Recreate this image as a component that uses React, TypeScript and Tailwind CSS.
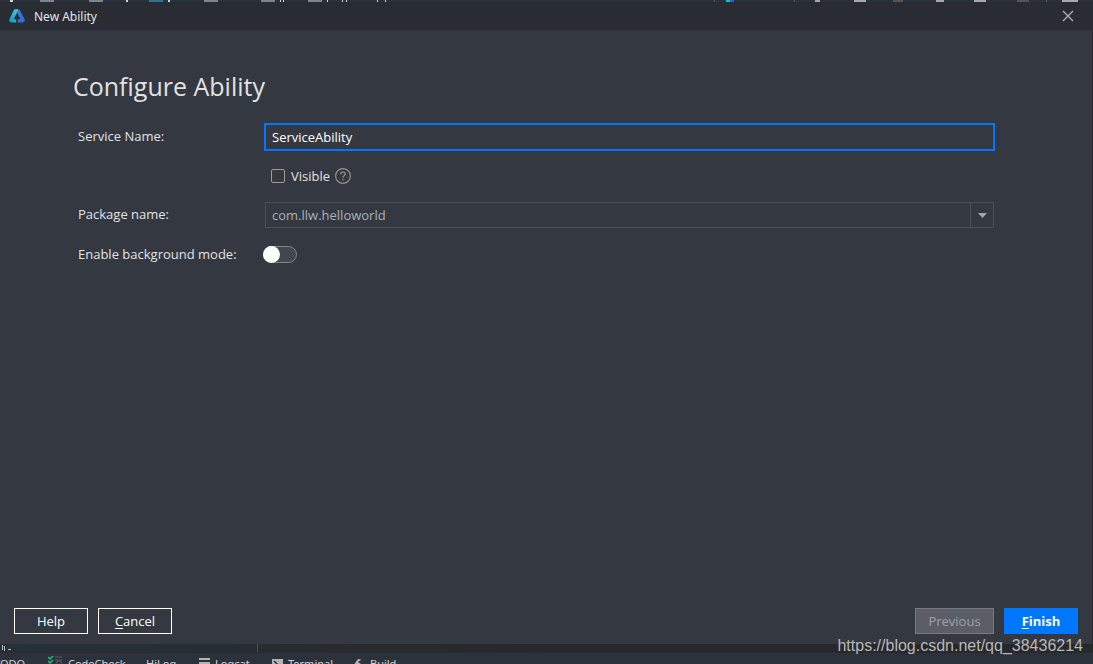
import { useState } from "react";

// tops of the IDE toolbar icons that stick out above the dialog
const pathMarks = [
  "ml-[10px] w-[3px] bg-slate-300",
  "ml-[27px] w-[14px] bg-[#7b868f]",
  "ml-[35px] w-[14px] bg-[#7b868f]",
  "ml-[23px] w-[2px] bg-slate-300",
  "ml-[21px] w-[14px] bg-[#2f7390]",
  "ml-[5px] w-[2px] bg-slate-300",
  "ml-[34px] w-[14px] bg-[#7b868f]",
  "ml-[43px] w-[14px] bg-[#7b868f]",
  "ml-[5px] w-[1px] bg-slate-300",
  "ml-[2px] w-[1px] bg-slate-300",
  "ml-[24px] w-[14px] bg-[#7b868f]",
  "ml-[5px] w-[1px] bg-slate-300",
  "ml-[14px] w-[1px] bg-slate-300",
  "ml-[3px] w-[1px] bg-slate-300",
  "ml-[30px] w-[1px] bg-slate-300",
  "ml-[7px] w-[1px] bg-slate-300",
];

const toolMarks = [
  "w-px bg-[#565c62]",
  "ml-[11px] w-[4px] bg-[#22b8c8]",
  "w-[4px] bg-[#2860c8]",
  "ml-[60px] w-px bg-[#565c62]",
  "ml-[20px] w-[5px] bg-[#a8a8a8]",
  "ml-[34px] w-[12px] bg-[#a8a8a8]",
  "ml-[27px] w-[10px] bg-[#575350]",
  "ml-[33px] w-[8px] bg-[#a8a8a8]",
  "ml-[30px] w-[12px] bg-[#a8a8a8]",
  "ml-[31px] w-[12px] bg-[#555250]",
  "ml-[17px] w-px bg-[#565c62]",
  "ml-[15px] w-[16px] bg-[#a8a8a8]",
];

function Logo() {
  return (
    <svg viewBox="0 0 16 14" className="h-[14px] w-4" aria-hidden="true">
      <defs>
        <linearGradient id="logoLeft" x1="0" y1="1" x2="1" y2="0">
          <stop offset="0" stopColor="#1590c4" />
          <stop offset="1" stopColor="#45d5dc" />
        </linearGradient>
        <linearGradient id="logoRight" x1="0" y1="0" x2="1" y2="1">
          <stop offset="0" stopColor="#2b83dd" />
          <stop offset="1" stopColor="#3b63d2" />
        </linearGradient>
      </defs>
      <path
        d="M5.800.2H9.800L8 3.600L4.600 10.200H7.200V13.600H2.200Q-.6 13.200.4 10.200L4.600 1.500Q5.100.4 5.800.2Z"
        fill="url(#logoLeft)"
      />
      <path
        d="M9.800.2Q10.500.6 11 1.500l4.600 8.700q1 3-1.800 3.400H8.800V10.200h2.600L8 3.600Z"
        fill="url(#logoRight)"
      />
    </svg>
  );
}

function TitleBar() {
  return (
    <header className="flex h-7 shrink-0 items-center bg-[#2a2c33] pr-[19px] pl-[9px]">
      <Logo />
      <h1 className="ml-[9px] flex-1 pt-px font-['Noto_Sans',sans-serif] text-xs text-[#e4e4e6]">New Ability</h1>
      <button aria-label="Close" className="text-[#b4b5b8]">
        <svg viewBox="0 0 12 12" className="size-3" fill="none" stroke="currentColor" strokeWidth="1.200">
          <path d="M1 1l10 10M11 1L1 11" />
        </svg>
      </button>
    </header>
  );
}

function StatusBar() {
  return (
    <footer className="h-5 shrink-0 overflow-hidden bg-[#2c323b] font-['Noto_Sans',sans-serif] text-[11px] leading-4 text-[#d0d2d4]">
      <div className="flex h-[9px] items-center border-b border-[#2b2a2b] bg-gradient-to-r from-[#26303a] via-[#27282b] to-[#27282b]">
        <span className="mb-px h-[5px] w-[3px] border-r border-[#b9bcc0]" />
        <span className="ml-px h-[5px] w-px bg-[#b9bcc0]" />
        <span className="mt-[3px] ml-[3px] h-px w-[3px] bg-[#b9bcc0]" />
        <span className="ml-[246px] h-full w-px bg-[#48525c]" />
      </div>
      <div className="flex items-start pt-[3px]">
        <span className="-ml-[6px] w-[32px]">TODO</span>
        <svg viewBox="0 0 14 14" className="ml-[22px] size-[14px]" fill="none">
          <path d="M0 1l2 2 3-3M0 5l2 2 3-3" stroke="#28b878" strokeWidth="1.500" />
          <path d="M7 1h7M7 4h7" stroke="#5b5d60" />
          <circle cx="11" cy="8" r="3" stroke="#5b5d60" />
        </svg>
        <span className="ml-[6px] w-[78px]">CodeCheck</span>
        <span className="w-[53px]">HiLog</span>
        <svg viewBox="0 0 12 12" className="mt-px size-3" fill="#b3b3b3">
          <path d="M0 1h11v2H0zM0 5h11v2H0z" />
        </svg>
        <span className="ml-1 w-[57px]">Logcat</span>
        <svg viewBox="0 0 12 12" className="mt-[3px] size-3">
          <path d="M0 0h11v11H0z" fill="#b3b3b3" />
          <path d="M2 2l3 3-3 3" fill="none" stroke="#333" strokeWidth="1.500" />
        </svg>
        <span className="ml-1 w-[64px]">Terminal</span>
        <svg viewBox="0 0 12 12" className="mt-[3px] size-3" fill="#b3b3b3">
          <path d="M0 9L5 1q3-2 4 0L6 3l3 2-2 2-2-1-3 5z" />
        </svg>
        <span className="ml-[6px]">Build</span>
      </div>
    </footer>
  );
}

export default function App() {
  const [name, setName] = useState("ServiceAbility");
  const [visible, setVisible] = useState(false);
  const [background, setBackground] = useState(false);

  return (
    <div className="relative flex h-screen flex-col overflow-hidden bg-[#27282b] font-['Open_Sans',sans-serif] text-[13px] leading-5 text-[#e1e2e4]">
      {/* IDE behind the dialog */}
      <div className="flex h-[2px] shrink-0 justify-between bg-[#28323b] pr-[15px]">
        <div className="flex">
          {pathMarks.map((mark, i) => (
            <span key={i} className={mark} />
          ))}
        </div>
        <div className="flex">
          {toolMarks.map((mark, i) => (
            <span key={i} className={mark} />
          ))}
        </div>
      </div>

      <TitleBar />

      {/* DIALOG */}
      <main className="mr-px flex min-h-0 flex-1 flex-col bg-[#343840]">
        <h2 className="mt-9 ml-[73px] text-[25px] leading-10">Configure Ability</h2>

        <form id="ability" className="mt-[17px] mr-[97px] ml-[78px] grid grid-cols-[186px_1fr] items-center">
          <label htmlFor="name" className="pb-[2px]">
            Service Name:
          </label>
          <input
            id="name"
            value={name}
            onChange={(e) => setName(e.target.value)}
            className="h-7 border-2 border-[#0077ff] bg-transparent px-[6px] text-white outline-none"
          />

          <div className="col-start-2 mt-[15px] flex h-5 items-center pl-[7px]">
            <input
              id="visible"
              type="checkbox"
              checked={visible}
              onChange={(e) => setVisible(e.target.checked)}
              className="size-[14px] appearance-none rounded-[2px] border border-[#9b9ca0] checked:bg-[#0077ff]"
            />
            <label htmlFor="visible" className="ml-[6px]">
              Visible
            </label>
            <svg viewBox="0 0 16 16" className="ml-[5px] size-4" fill="none" stroke="#8f9196">
              <circle cx="8" cy="8" r="7.400" strokeWidth="1.200" />
              <path d="M5.800 6.300q0-2.200 2.200-2.200t2.200 2q0 1-1.100 1.700Q8 8.500 8 9.800M8 11v1.300" strokeWidth="1.300" />
            </svg>
          </div>

          <label htmlFor="package" className="mt-4 pb-[2px]">
            Package name:
          </label>
          <div className="relative mt-4 mr-px ml-px">
            <select
              id="package"
              className="block h-[26px] w-full appearance-none border border-[#4b4f5a] bg-transparent pl-[6px] text-[#a9afbc] outline-none"
            >
              <option>com.llw.helloworld</option>
            </select>
            <span className="pointer-events-none absolute inset-y-0 right-0 flex w-6 items-center justify-center border-l border-[#4b4f5a] pr-px">
              <svg viewBox="0 0 9 5" className="h-[5px] w-[9px]" fill="#a5a6ab">
                <path d="M0 0h9L4.500 5z" />
              </svg>
            </span>
          </div>

          <label htmlFor="background" className="mt-4 pb-[2px]">
            Enable background mode:
          </label>
          <input
            id="background"
            type="checkbox"
            role="switch"
            checked={background}
            onChange={(e) => setBackground(e.target.checked)}
            className="mt-[14px] -ml-px flex h-[17px] w-[34px] appearance-none items-center rounded-full border border-[#85878d] bg-[#42464e] before:-ml-px before:size-[17px] before:rounded-full before:bg-white checked:justify-end checked:bg-[#0077ff]"
          />
        </form>

        <div className="mt-auto mb-[10px] flex gap-[10px] pr-[14px] pl-[14px]">
          <button className="h-[26px] w-[74px] border border-white text-white">Help</button>
          <button className="h-[26px] w-[74px] border border-white text-white">
            <span className="underline underline-offset-2">C</span>ancel
          </button>
          <button disabled className="ml-auto h-[26px] w-[79px] border border-[#777a81] bg-[#5b5e66] text-[#a0a2a8]">
            Previous
          </button>
          <button form="ability" type="button" className="h-[26px] w-[74px] bg-[#0077ff] font-bold text-white">
            <span className="underline underline-offset-2">F</span>inish
          </button>
        </div>
      </main>

      <StatusBar />

      <p className="pointer-events-none absolute right-[10px] bottom-2 font-['Liberation_Sans',sans-serif] text-base leading-5 text-[#b7b8ba]">
        https://blog.csdn.net/qq_38436214
      </p>
    </div>
  );
}
